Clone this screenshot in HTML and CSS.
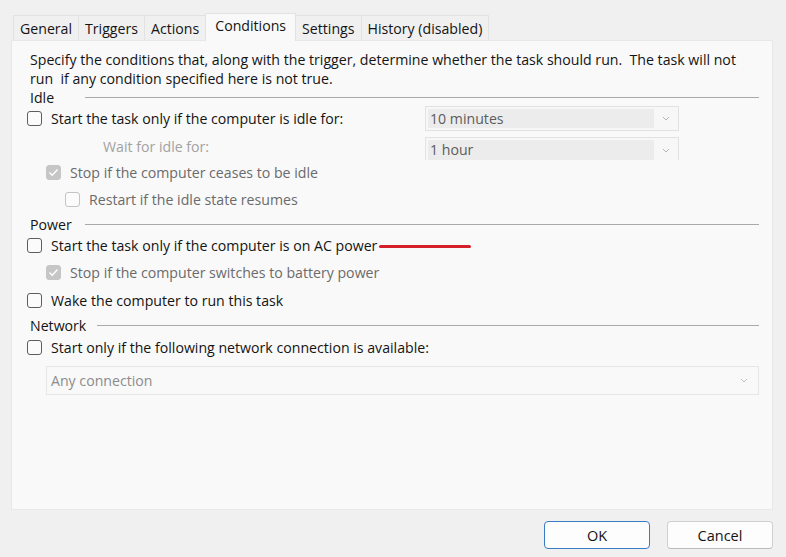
FILE: index.html
```html
<!DOCTYPE html>
<html>
<head>
<meta charset="utf-8">
<link rel="stylesheet" href="styles.css">
</head>
<body>
<div class="window">
  <div class="tabs">
    <div class="tab">General</div>
    <div class="tab">Triggers</div>
    <div class="tab">Actions</div>
    <div class="tab active">Conditions</div>
    <div class="tab">Settings</div>
    <div class="tab">History (disabled)</div>
  </div>
  <div class="panel">
    <p class="desc">Specify the conditions that, along with the trigger, determine whether the task should run.&nbsp; The task will not<br>run &nbsp;if any condition specified here is not true.</p>
    <div class="conditions">
      <div class="hdr"><span class="hdr-label">Idle</span><span class="rule"></span></div>
      <div class="row">
        <label class="lead check"><span class="cb"></span>Start the task only if the computer is idle for:</label>
        <div class="combo"><span class="combo-text">10 minutes</span><span class="combo-btn"><svg width="8" height="5" viewBox="0 0 8 5"><polyline points="1,1 4,4 7,1" fill="none" stroke="#b5b5b5" stroke-width="1"/></svg></span></div>
      </div>
      <div class="row row-top">
        <span class="lead wait">Wait for idle for:</span>
        <div class="combo combo-cut"><span class="combo-text">1 hour</span><span class="combo-btn"><svg width="8" height="5" viewBox="0 0 8 5"><polyline points="1,1 4,4 7,1" fill="none" stroke="#b5b5b5" stroke-width="1"/></svg></span></div>
      </div>
      <div class="row lvl1">
        <label class="check dim"><span class="cb cb-on"><svg width="11" height="9" viewBox="0 0 11 9"><polyline points="1.5,4.5 4.2,7.2 9.5,1.5" fill="none" stroke="#ffffff" stroke-width="1.4"/></svg></span>Stop if the computer ceases to be idle</label>
      </div>
      <div class="row lvl2">
        <label class="check dim"><span class="cb cb-off"></span>Restart if the idle state resumes</label>
      </div>
      <div class="hdr"><span class="hdr-label">Power</span><span class="rule"></span></div>
      <div class="row">
        <label class="check"><span class="cb"></span>Start the task only if the computer is on AC power</label><span class="mark"></span>
      </div>
      <div class="row lvl1">
        <label class="check dim"><span class="cb cb-on"><svg width="11" height="9" viewBox="0 0 11 9"><polyline points="1.5,4.5 4.2,7.2 9.5,1.5" fill="none" stroke="#ffffff" stroke-width="1.4"/></svg></span>Stop if the computer switches to battery power</label>
      </div>
      <div class="row">
        <label class="check"><span class="cb"></span>Wake the computer to run this task</label>
      </div>
      <div class="hdr"><span class="hdr-label">Network</span><span class="rule"></span></div>
      <div class="row">
        <label class="check"><span class="cb"></span>Start only if the following network connection is available:</label>
      </div>
      <div class="row lvl1 net-row">
        <div class="net-select"><span class="net-text">Any connection</span><svg width="8" height="5" viewBox="0 0 8 5"><polyline points="1,1 4,4 7,1" fill="none" stroke="#c2c2c2" stroke-width="1"/></svg></div>
      </div>
    </div>
  </div>
  <div class="footer">
    <button class="btn btn-primary">OK</button>
    <button class="btn">Cancel</button>
  </div>
</div>
</body>
</html>
```
FILE: styles.css
```css
* { box-sizing: border-box; }
body {
  margin: 0;
  background: #f0f0f0;
  font-family: "Open Sans", "Noto Sans", sans-serif;
  font-size: 14.15px;
  color: #141414;
}
.window {
  width: 786px;
  height: 557px;
  display: flex;
  flex-direction: column;
}
.tabs {
  display: flex;
  align-items: flex-end;
  height: 40px;
  padding-left: 13px;
}
.tab {
  height: 25px;
  padding: 0 6px;
  border: 1px solid #e2e2e2;
  border-bottom: none;
  margin-right: -1px;
  display: flex;
  align-items: center;
  background: #f0f0f0;
}
.tab.active {
  height: 28px;
  background: #f9f9f9;
  position: relative;
  z-index: 1;
  margin-bottom: -1px;
  padding: 0 9px 4px;
}
.panel {
  margin-left: 11px;
  width: 762px;
  height: 470px;
  background: #f9f9f9;
  border: 1px solid #e8e8e8;
  padding: 9px 15px 0 15px;
}
.desc {
  margin: 0 0 0 3px;
  line-height: 19px;
  white-space: nowrap;
}
.conditions {
  display: grid;
  grid-template-rows: 18px 25px 32px 18px 36px 14px 28px 26px 30px 20px 24px 36px;
}
.hdr {
  display: flex;
  align-items: center;
  padding-left: 3px;
}
.hdr-label {
  min-width: 44px;
  margin-right: 11px;
  line-height: 19px;
}
.rule {
  flex: 1;
  height: 1px;
  background: #a9a9a9;
}
.row {
  display: flex;
  align-items: center;
  line-height: 19px;
}
.row-top { align-items: flex-start; }
.lvl1 { padding-left: 19px; }
.lvl2 { padding-left: 38px; }
.check {
  display: flex;
  align-items: center;
  white-space: nowrap;
}
.lead {
  width: 398px;
  flex: none;
}
.wait {
  padding-left: 76px;
  color: #a2a2a2;
  margin-top: 6px;
}
.dim { color: #6b6b6b; }
.cb {
  width: 15px;
  height: 15px;
  flex: none;
  border: 1px solid #5e5e5e;
  border-radius: 3px;
  background: #fbfbfb;
  margin-right: 9px;
  display: flex;
  align-items: center;
  justify-content: center;
}
.cb-on {
  background: #c6c6c6;
  border-color: #c6c6c6;
}
.cb-off {
  border-color: #c4c4c4;
}
.combo {
  width: 254px;
  height: 25px;
  border: 1px solid #e2e2e2;
  background: #f7f7f7;
  display: flex;
  padding: 2px 0 2px 2px;
}
.combo-cut {
  height: 23px;
  border-bottom: none;
  margin-top: 6px;
  padding-bottom: 0;
}
.combo-text {
  flex: 1;
  background: #ececec;
  color: #5c5c5c;
  padding-left: 2px;
  line-height: 20px;
}
.combo-btn {
  width: 24px;
  display: flex;
  align-items: center;
  justify-content: center;
}
.mark {
  width: 92px;
  height: 3px;
  margin-left: 2px;
  margin-top: 2px;
  background: #d3202b;
  border-radius: 2px;
}
.net-row { align-items: flex-end; }
.net-select {
  width: 713px;
  height: 29px;
  border: 1px solid #e6e6e6;
  background: #f9f9f9;
  display: flex;
  align-items: center;
  justify-content: space-between;
  padding: 0 10px 0 4px;
}
.net-text { color: #8c8c8c; }
.footer {
  display: flex;
  justify-content: flex-end;
  gap: 17px;
  padding: 11px 13px 0 0;
}
.btn {
  width: 106px;
  height: 28px;
  font-family: inherit;
  font-size: 14.5px;
  color: #141414;
  background: #fdfdfd;
  border: 1px solid #d0d0d0;
  border-bottom-color: #bcbcbc;
  border-radius: 4px;
  padding: 0;
}
.btn-primary {
  border: 1px solid #3b7cc6;
}
```
